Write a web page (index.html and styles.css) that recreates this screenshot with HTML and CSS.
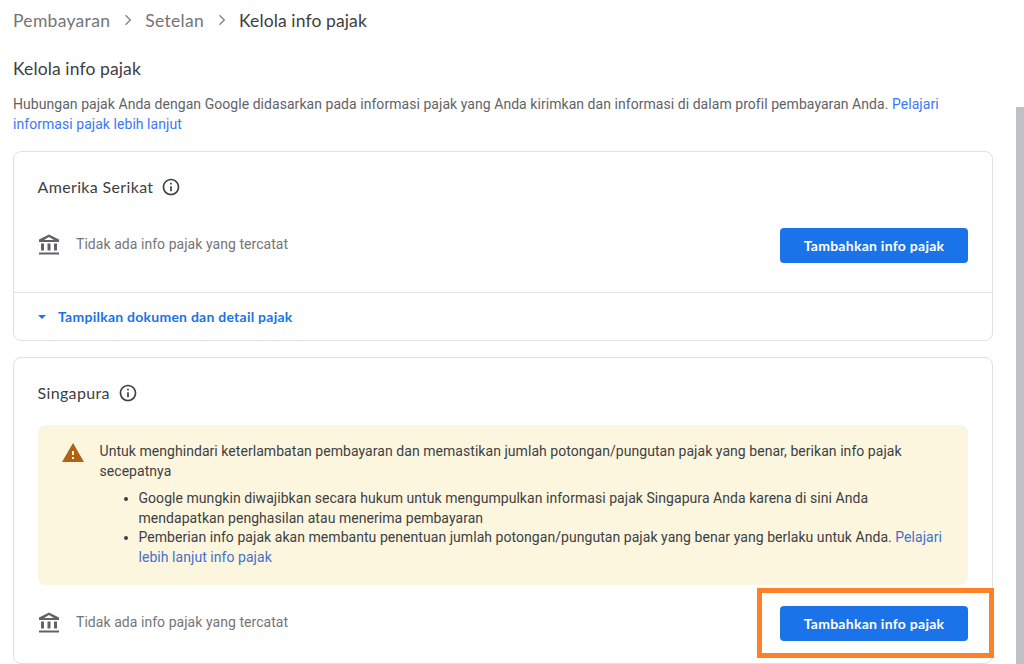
FILE: index.html
```html
<!DOCTYPE html>
<html lang="id">
<head>
    <meta charset="UTF-8">
    <meta name="viewport" content="width=device-width, initial-scale=1.0">
    <title>Kelola info pajak</title>
    <link rel="stylesheet" href="styles.css">
</head>
<body>

    <div class="page">
        <div class="breadcrumb">
            <a href="#">Pembayaran</a>
            <svg class="chevron" viewBox="0 0 8 12"><path d="M1.5 1.2 6.3 6 1.5 10.8"/></svg>
            <a href="#">Setelan</a>
            <svg class="chevron" viewBox="0 0 8 12"><path d="M1.5 1.2 6.3 6 1.5 10.8"/></svg>
            <span class="current">Kelola info pajak</span>
        </div>

        <h1>Kelola info pajak</h1>
        <p class="intro">Hubungan pajak Anda dengan Google didasarkan pada informasi pajak yang Anda kirimkan dan informasi di dalam profil pembayaran Anda. <a href="#">Pelajari<br>informasi pajak lebih lanjut</a></p>

        <!-- Amerika Serikat -->
        <div class="card">
            <div class="card-title">
                <h2>Amerika Serikat</h2>
                <svg class="info" viewBox="0 0 24 24"><path d="M11 7h2v2h-2zm0 4h2v6h-2zm1-9C6.48 2 2 6.48 2 12s4.48 10 10 10 10-4.48 10-10S17.52 2 12 2zm0 18c-4.41 0-8-3.59-8-8s3.59-8 8-8 8 3.59 8 8-3.59 8-8 8z"/></svg>
            </div>
            <div class="tax-row tax-row-us">
                <svg class="bank" viewBox="0 0 22 22"><path d="M11 .5 1 5.500v2.500h20V5.500zm0 2.500L16 6H6zM3 9.500h3v7H3zm6.500 0h3v7h-3zm6.500 0h3v7h-3zM1 18.500h20v2H1z"/></svg>
                <span class="status">Tidak ada info pajak yang tercatat</span>
                <button class="btn">Tambahkan info pajak</button>
            </div>
            <div class="card-footer">
                <svg class="arrow" viewBox="0 0 8 4"><path d="M0 0h8L4 4z"/></svg>
                <a href="#">Tampilkan dokumen dan detail pajak</a>
            </div>
        </div>

        <!-- Singapura -->
        <div class="card">
            <div class="card-title">
                <h2>Singapura</h2>
                <svg class="info" viewBox="0 0 24 24"><path d="M11 7h2v2h-2zm0 4h2v6h-2zm1-9C6.48 2 2 6.48 2 12s4.48 10 10 10 10-4.48 10-10S17.52 2 12 2zm0 18c-4.41 0-8-3.59-8-8s3.59-8 8-8 8 3.59 8 8-3.59 8-8 8z"/></svg>
            </div>
            <div class="warning">
                <svg class="warning-icon" viewBox="0 0 22 19"><path d="M0 19h22L11 0zm12-3h-2v-2h2zm0-4h-2V8h2z"/></svg>
                <div class="warning-text">
                    <p>Untuk menghindari keterlambatan pembayaran dan memastikan jumlah potongan/pungutan pajak yang benar, berikan info pajak<br>secepatnya</p>
                    <ul>
                        <li>Google mungkin diwajibkan secara hukum untuk mengumpulkan informasi pajak Singapura Anda karena di sini Anda<br>mendapatkan penghasilan atau menerima pembayaran</li>
                        <li>Pemberian info pajak akan membantu penentuan jumlah potongan/pungutan pajak yang benar yang berlaku untuk Anda. <a href="#">Pelajari<br>lebih lanjut info pajak</a></li>
                    </ul>
                </div>
            </div>
            <div class="tax-row tax-row-sg">
                <svg class="bank" viewBox="0 0 22 22"><path d="M11 .5 1 5.500v2.500h20V5.500zm0 2.500L16 6H6zM3 9.500h3v7H3zm6.500 0h3v7h-3zm6.500 0h3v7h-3zM1 18.500h20v2H1z"/></svg>
                <span class="status">Tidak ada info pajak yang tercatat</span>
                <div class="btn-wrap">
                    <button class="btn">Tambahkan info pajak</button>
                    <div class="highlight"></div>
                </div>
            </div>
        </div>
    </div>

    <div class="scrollbar"></div>

</body>
</html>
```
FILE: styles.css
```css
* {
    box-sizing: border-box;
}
body {
    margin: 0;
    height: 664px;
    overflow: hidden;
    display: flex;
    justify-content: space-between;
    background: #fff;
    font-family: Roboto, Arial, sans-serif;
    font-size: 14px;
    line-height: 19.5px;
    letter-spacing: 0.05px;
    color: #3c4043;
}
a {
    color: #3b78f5;
    text-decoration: none;
}
h1, h2, p, ul {
    margin: 0;
}
svg {
    flex: none;
    fill: currentColor;
}
.page {
    width: 980px;
    margin-left: 13px;
    white-space: nowrap;
}
.breadcrumb {
    display: flex;
    align-items: center;
    height: 24px;
    margin-top: 9px;
    font-family: Lato, sans-serif;
    font-size: 17.5px;
    letter-spacing: 0.3px;
}
.breadcrumb a {
    color: #757575;
}
.breadcrumb .current {
    color: #3c4043;
    letter-spacing: 0.12px;
}
.chevron {
    position: relative;
    top: -1px;
    width: 8px;
    height: 12px;
    margin: 0 13.5px;
    fill: none;
    stroke: #80868b;
    stroke-width: 1.4;
}
h1 {
    height: 24px;
    margin-top: 24px;
    font-family: Lato, sans-serif;
    font-size: 17.5px;
    font-weight: 400;
    line-height: 24px;
    letter-spacing: 0.12px;
}
.intro {
    margin-top: 14px;
    color: #5f6368;
}
.card {
    margin-top: 16px;
    border: 1px solid #e0e1e4;
    border-radius: 8px;
}
.intro + .card {
    height: 190px;
    margin-top: 17px;
}
.card + .card {
    height: 307px;
}
.card-title {
    display: flex;
    align-items: center;
    gap: 8px;
    height: 20px;
    margin: 25px 24px 0 23.5px;
}
.card-title h2 {
    font-family: Lato, sans-serif;
    font-size: 16px;
    font-weight: 400;
    letter-spacing: 0.35px;
}
.info {
    width: 20px;
    height: 20px;
}
.tax-row {
    display: flex;
    align-items: center;
    height: 36px;
    padding: 0 24px;
    color: #757575;
}
.tax-row-us {
    margin: 30px 0 29px;
}
.tax-row-sg {
    margin-top: 20px;
}
.bank {
    width: 22px;
    height: 22px;
    margin-right: 16px;
    color: #5f6368;
}
.btn {
    width: 188px;
    height: 35px;
    margin: 0;
    padding: 0;
    border: none;
    border-radius: 4px;
    background: #1a73e8;
    color: #fff;
    font-family: Lato, sans-serif;
    font-size: 14px;
    font-weight: 700;
    letter-spacing: 0.27px;
}
.tax-row > .btn, .btn-wrap {
    margin-left: auto;
}
.card-footer {
    display: flex;
    align-items: center;
    height: 48px;
    padding: 1px 0 0 24px;
    border-top: 1px solid #e0e1e4;
    color: #1a73e8;
    font-family: Lato, sans-serif;
    font-size: 14px;
    font-weight: 700;
    letter-spacing: 0.25px;
}
.card-footer a {
    color: inherit;
}
.arrow {
    width: 8px;
    height: 4px;
    margin-right: 12px;
}
.warning {
    display: flex;
    height: 160px;
    margin: 22px 24px 0 23.5px;
    padding: 17px 0 0 24px;
    border-radius: 8px;
    background: #fdf6df;
}
.warning-icon {
    width: 22px;
    height: 19px;
    margin: 1px 16px 0 0;
    color: #b06214;
}
.warning ul {
    margin-top: 8px;
    padding-left: 39px;
}
.warning a {
    color: #4470cc;
}
.btn-wrap {
    position: relative;
    height: 35px;
}
/* orange frame around the second button */
.highlight {
    position: absolute;
    top: -18px;
    left: -23px;
    width: 237px;
    height: 70px;
    border: 5px solid #ff8127;
}
.scrollbar {
    width: 8px;
    margin-top: 107px;
    background: #bdc1c6;
}
```
